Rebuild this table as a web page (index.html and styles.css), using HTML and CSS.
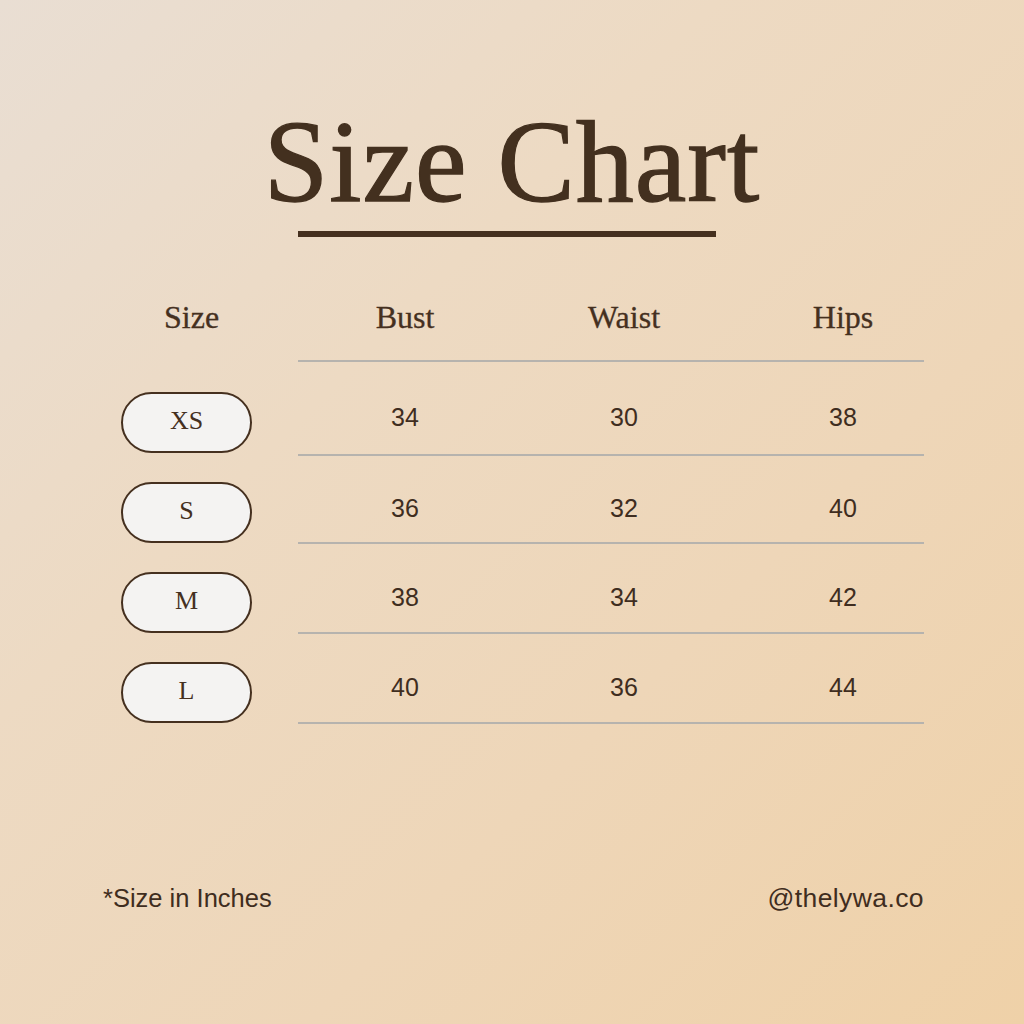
FILE: index.html
```html
<!DOCTYPE html>
<html lang="en">
<head>
<meta charset="utf-8">
<title>Size Chart</title>
<link rel="stylesheet" href="styles.css">
</head>
<body>
<main class="page">
  <header class="title-block">
    <h1 class="title">Size Chart</h1>
    <div class="title-rule"></div>
  </header>

  <section class="chart">
    <div class="row head-row">
      <div class="size-cell head-size">Size</div>
      <div class="data head-data">
        <div class="cell head">Bust</div>
        <div class="cell head">Waist</div>
        <div class="cell head last">Hips</div>
      </div>
    </div>

    <div class="row row-first">
      <div class="size-cell"><span class="pill">XS</span></div>
      <div class="data">
        <div class="cell num">34</div>
        <div class="cell num">30</div>
        <div class="cell num last">38</div>
      </div>
    </div>
    <div class="row row-second">
      <div class="size-cell"><span class="pill">S</span></div>
      <div class="data">
        <div class="cell num">36</div>
        <div class="cell num">32</div>
        <div class="cell num last">40</div>
      </div>
    </div>
    <div class="row">
      <div class="size-cell"><span class="pill">M</span></div>
      <div class="data">
        <div class="cell num">38</div>
        <div class="cell num">34</div>
        <div class="cell num last">42</div>
      </div>
    </div>
    <div class="row">
      <div class="size-cell"><span class="pill">L</span></div>
      <div class="data">
        <div class="cell num">40</div>
        <div class="cell num">36</div>
        <div class="cell num last">44</div>
      </div>
    </div>
  </section>

  <footer class="footer">
    <span class="note">*Size in Inches</span>
    <span class="handle">@thelywa.co</span>
  </footer>
</main>
</body>
</html>
```

FILE: styles.css
```css
html, body {
  margin: 0;
  padding: 0;
}

body {
  width: 1024px;
  height: 1024px;
  overflow: hidden;
}

.page {
  box-sizing: border-box;
  width: 1024px;
  height: 1024px;
  padding-top: 104px;
  background: linear-gradient(135deg, #e9ded3 0%, #eddac3 35%, #eed6b8 65%, #efd1a8 100%);
  color: #43301f;
  display: flex;
  flex-direction: column;
}

.title-block {
  display: flex;
  flex-direction: column;
}

.title {
  margin: 0;
  font-family: "Liberation Serif", "Times New Roman", serif;
  font-weight: 400;
  font-size: 116px;
  line-height: 116px;
  letter-spacing: 1px;
  text-align: center;
  color: #43301f;
  -webkit-text-stroke: 1.3px #43301f;
}

.title-rule {
  margin-top: 11px;
  margin-left: 298px;
  width: 418px;
  height: 6px;
  background: #45301f;
}

.chart {
  margin-top: 64px;
  display: flex;
  flex-direction: column;
}

.row {
  display: flex;
}

.size-cell {
  box-sizing: border-box;
  width: 298px;
  padding-left: 121px;
  display: flex;
  align-items: flex-end;
}

.data {
  box-sizing: border-box;
  width: 626px;
  height: 90px;
  border-bottom: 2px solid #b6b3ae;
  padding-top: 18px;
  display: grid;
  grid-template-columns: 214px 224px 188px;
  align-items: center;
}

.row-first .data {
  height: 94px;
}

.row-first .pill {
  margin-bottom: 3px;
}

.row-second .data {
  height: 88px;
}

.cell {
  text-align: center;
}

.cell.last {
  padding-left: 26px;
}

.head-size,
.head {
  font-family: "Liberation Serif", "Times New Roman", serif;
  font-size: 32px;
  line-height: 32px;
  color: #45301f;
  -webkit-text-stroke: 0.3px #45301f;
}

.head-row .head-size {
  display: block;
  padding-left: 164px;
}

.head-data {
  height: auto;
  padding-top: 0;
  padding-bottom: 27px;
  align-items: start;
}

.num {
  font-family: "Liberation Sans", Arial, sans-serif;
  font-size: 25px;
  line-height: 25px;
  color: #3f2d20;
}

.pill {
  box-sizing: border-box;
  width: 131px;
  height: 61px;
  margin-bottom: 1px;
  padding-bottom: 4px;
  border: 2px solid #45301f;
  border-radius: 31px;
  background: #f4f3f2;
  display: flex;
  align-items: center;
  justify-content: center;
  font-family: "Liberation Serif", "Times New Roman", serif;
  font-size: 26px;
  color: #45301f;
}

.footer {
  margin-top: 161px;
  padding-left: 103px;
  padding-right: 100px;
  display: flex;
  justify-content: space-between;
  align-items: baseline;
  font-family: "Liberation Sans", Arial, sans-serif;
  color: #3f2d20;
}

.note {
  font-size: 25.5px;
  line-height: 26px;
}

.handle {
  font-size: 26.5px;
  line-height: 26px;
  letter-spacing: 0.4px;
}
```
